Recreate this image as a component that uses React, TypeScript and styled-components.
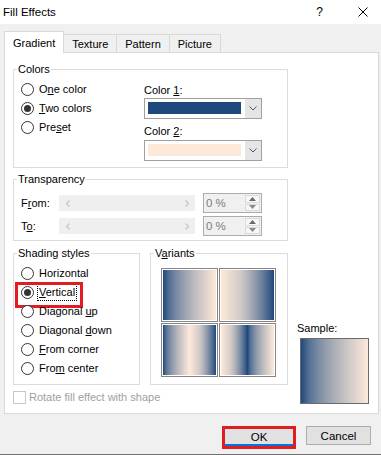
import React from "react";
import styled, { createGlobalStyle } from "styled-components";

const BLUE = "#1f497d";
const PEACH = "#fde9d9";

const GlobalStyle = createGlobalStyle`
  html, body { margin: 0; padding: 0; background: #f0f0f0; }
  body { font-family: "Liberation Sans", Arial, sans-serif; font-size: 11px; color: #000; }
  * { box-sizing: border-box; }
`;

const Window = styled.div`
  width: 381px;
  height: 455px;
  display: flex;
  flex-direction: column;
  background: #f0f0f0;
  border-bottom: 1px solid #707070;
  overflow: hidden;
`;

const TitleBar = styled.div`
  height: 24px;
  flex-shrink: 0;
  background: #fff;
  display: flex;
  align-items: center;
  padding: 0 13px 0 3px;
`;

const Title = styled.div`
  flex: 1;
  font-size: 11.5px;
`;

const HelpMark = styled.span`
  font-size: 12px;
  margin-right: 35px;
`;

const TabStrip = styled.div`
  display: flex;
  align-items: flex-end;
  height: 21px;
  margin: 7px 0 0 4px;
  position: relative;
  z-index: 1;
`;

const Tab = styled.div<{ $active?: boolean }>`
  height: ${(p) => (p.$active ? 22 : 18)}px;
  margin-bottom: ${(p) => (p.$active ? -1 : 0)}px;
  margin-left: -1px;
  &:first-child { margin-left: 0; }
  padding: 0 8px;
  display: flex;
  align-items: center;
  background: ${(p) => (p.$active ? "#fff" : "#f0f0f0")};
  border: 1px solid #d9d9d9;
  border-bottom: none;
  position: relative;
  z-index: ${(p) => (p.$active ? 2 : 1)};
`;

const Panel = styled.div`
  margin-left: 4px;
  width: 375px;
  height: 362px;
  flex-shrink: 0;
  background: #fff;
  border: 1px solid #d9d9d9;
  padding: 9px 0 0 8px;
  display: flex;
  flex-direction: column;
`;

const Group = styled.fieldset<{ $w: number }>`
  margin: 0;
  padding: 0;
  min-width: 0;
  width: ${(p) => p.$w}px;
  border: 1px solid #dcdcdc;
`;

const Legend = styled.legend`
  margin-left: 3px;
  padding: 0 1px;
  font-size: 11px;
  line-height: 14px;
`;

const ColorsBody = styled.div`
  display: flex;
  padding: 4px 0 6px 7px;
`;

const RadioList = styled.div<{ $w?: number }>`
  display: flex;
  flex-direction: column;
  width: ${(p) => (p.$w ? `${p.$w}px` : "auto")};
`;

const RadioRow = styled.div`
  height: 19px;
  display: flex;
  align-items: center;
  position: relative;
`;

const RadioCircle = styled.span<{ $checked?: boolean }>`
  width: 13px;
  height: 13px;
  flex-shrink: 0;
  border-radius: 50%;
  border: 1px solid #333;
  background: #fff;
  display: flex;
  align-items: center;
  justify-content: center;
  &::after {
    content: "";
    width: 7px;
    height: 7px;
    border-radius: 50%;
    background: ${(p) => (p.$checked ? "#333" : "transparent")};
  }
`;

const RadioText = styled.span<{ $focused?: boolean }>`
  margin-left: ${(p) => (p.$focused ? 4 : 5)}px;
  padding: 0 ${(p) => (p.$focused ? 1 : 0)}px;
  line-height: 15px;
  outline: ${(p) => (p.$focused ? "1px dotted #000" : "none")};
`;

const RedMark = styled.span`
  position: absolute;
  left: -6px;
  top: -1px;
  width: 68px;
  height: 26px;
  border: 3px solid #e31b23;
  pointer-events: none;
`;

const ColorColumn = styled.div`
  display: flex;
  flex-direction: column;
  width: 118px;
`;

const FieldLabel = styled.div<{ $top: number }>`
  line-height: 14px;
  margin-top: ${(p) => p.$top}px;
`;

const ColorCombo = styled.div<{ $top: number }>`
  display: flex;
  height: 21px;
  margin-top: ${(p) => p.$top}px;
  border: 1px solid #a0a0a0;
  background: #fff;
`;

const Swatch = styled.div<{ $color: string }>`
  flex: 1;
  margin: 3px 4px 4px 3px;
  background: ${(p) => p.$color};
`;

const ComboButton = styled.div`
  width: 16px;
  background: #e5e5e5;
  display: flex;
  align-items: center;
  justify-content: center;
`;

const TransBody = styled.div`
  display: flex;
  flex-direction: column;
  gap: 3px;
  padding: 7px 0 4px 7px;
`;

const SliderRow = styled.div`
  display: flex;
  align-items: center;
  height: 20px;
`;

const RowLabel = styled.span`
  width: 38px;
`;

const Slider = styled.div`
  width: 136px;
  height: 16px;
  background: #efefef;
  display: flex;
  align-items: center;
  justify-content: space-between;
  padding: 0 6px 0 7px;
`;

const SpinBox = styled.div`
  display: flex;
  width: 59px;
  height: 20px;
  margin-left: 8px;
  border: 1px solid #acacac;
  background: #f0f0f0;
`;

const SpinValue = styled.div`
  flex: 1;
  padding-left: 2px;
  display: flex;
  align-items: center;
  color: #7b7b7b;
  font-size: 11.5px;
`;

const SpinButtons = styled.div`
  width: 16px;
  display: flex;
  flex-direction: column;
  gap: 1px;
  padding: 1px 1px 1px 0;
`;

const SpinHalf = styled.div`
  flex: 1;
  background: #f7f7f7;
  border: 1px solid #dadada;
  display: flex;
  align-items: center;
  justify-content: center;
`;

const Lower = styled.div`
  display: flex;
  margin-top: 5px;
`;

const LeftCol = styled.div`
  display: flex;
  flex-direction: column;
`;

const GroupsRow = styled.div`
  display: flex;
  gap: 10px;
  align-items: stretch;
`;

const ShadingBody = styled.div`
  padding: 4px 0 6px 7px;
`;

const VariantsBody = styled.div`
  display: grid;
  grid-template-columns: 57px 57px;
  grid-auto-rows: 54px;
  gap: 1px;
  padding: 8px 0 0 10px;
`;

const Tile = styled.div<{ $fill: string }>`
  border: 1px solid #858585;
  padding: 1px;
  background: #fff;
  &::after {
    content: "";
    display: block;
    width: 100%;
    height: 100%;
    background: ${(p) => p.$fill};
  }
`;

const CheckRow = styled.div`
  display: flex;
  align-items: center;
  height: 14px;
  margin-top: 5px;
  color: #a0a0a0;
`;

const CheckBox = styled.span`
  width: 13px;
  height: 13px;
  border: 1px solid #c8c8c8;
  background: #fff;
  margin-right: 3px;
`;

const SampleCol = styled.div`
  display: flex;
  flex-direction: column;
  justify-content: flex-end;
  margin-left: 9px;
`;

const SampleLabel = styled.div`
  line-height: 14px;
`;

const SampleBox = styled.div`
  width: 69px;
  height: 66px;
  margin: 3px 0 0 3px;
  border: 1px solid #6b6b6b;
  background: linear-gradient(90deg, ${BLUE}, 35%, ${PEACH});
`;

const Footer = styled.div`
  display: flex;
  justify-content: flex-end;
  align-items: flex-start;
  gap: 10px;
  padding: 12px 10px 0 0;
`;

const RedFrame = styled.div`
  width: 74px;
  height: 23px;
  border: 3px solid #e31b23;
  display: flex;
`;

const Button = styled.div<{ $default?: boolean }>`
  width: ${(p) => (p.$default ? "100%" : "65px")};
  height: ${(p) => (p.$default ? "100%" : "19px")};
  background: #e1e1e1;
  border: ${(p) => (p.$default ? "none" : "1px solid #adadad")};
  border-bottom: ${(p) => (p.$default ? "2px solid #0078d7" : "1px solid #adadad")};
  display: flex;
  align-items: center;
  justify-content: center;
  font-size: 11.5px;
`;

const Chevron = () => (
  <svg width="8" height="5" viewBox="0 0 8 5">
    <polyline points="0.5,0.5 4,4 7.5,0.5" fill="none" stroke="#555" strokeWidth="1" />
  </svg>
);

const Arrow = ({ dir }: { dir: "left" | "right" }) => (
  <svg width="4" height="7" viewBox="0 0 4 7">
    <polyline
      points={dir === "left" ? "3.5,0.5 0.5,3.5 3.5,6.5" : "0.5,0.5 3.5,3.5 0.5,6.5"}
      fill="none"
      stroke="#c4c4c4"
      strokeWidth="1.2"
    />
  </svg>
);

const Tri = ({ up }: { up?: boolean }) => (
  <svg width="7" height="4" viewBox="0 0 7 4">
    <polygon points={up ? "0,4 3.5,0 7,4" : "0,0 3.5,4 7,0"} fill={up ? "#6a6a6a" : "#8a8a8a"} />
  </svg>
);

const CloseIcon = () => (
  <svg width="10" height="10" viewBox="0 0 10 10">
    <path d="M0.5 0.5 L9.5 9.5 M9.5 0.5 L0.5 9.5" stroke="#000" strokeWidth="1" />
  </svg>
);

const Radio = ({ checked, focused, marked, children }: { checked?: boolean; focused?: boolean; marked?: boolean; children: React.ReactNode }) => (
  <RadioRow>
    <RadioCircle $checked={checked} />
    <RadioText $focused={focused}>{children}</RadioText>
    {marked && <RedMark />}
  </RadioRow>
);

const TransRow = ({ label }: { label: React.ReactNode }) => (
  <SliderRow>
    <RowLabel>{label}</RowLabel>
    <Slider>
      <Arrow dir="left" />
      <Arrow dir="right" />
    </Slider>
    <SpinBox>
      <SpinValue>0 %</SpinValue>
      <SpinButtons>
        <SpinHalf><Tri up /></SpinHalf>
        <SpinHalf><Tri /></SpinHalf>
      </SpinButtons>
    </SpinBox>
  </SliderRow>
);

const variants = [
  `linear-gradient(90deg, ${BLUE}, 35%, ${PEACH})`,
  `linear-gradient(90deg, ${PEACH}, 65%, ${BLUE})`,
  `linear-gradient(90deg, ${BLUE}, 17%, ${PEACH} 50%, 83%, ${BLUE})`,
  `linear-gradient(90deg, ${PEACH}, 33%, ${BLUE} 50%, 67%, ${PEACH})`,
];

export default function App() {
  return (
    <Window>
      <GlobalStyle />
      <TitleBar>
        <Title>Fill Effects</Title>
        <HelpMark>?</HelpMark>
        <CloseIcon />
      </TitleBar>

      <TabStrip>
        <Tab $active>Gradient</Tab>
        <Tab>Texture</Tab>
        <Tab>Pattern</Tab>
        <Tab>Picture</Tab>
      </TabStrip>

      <Panel>
        <Group $w={275}>
          <Legend>Colors</Legend>
          <ColorsBody>
            <RadioList $w={123}>
              <Radio>O<u>n</u>e color</Radio>
              <Radio checked><u>T</u>wo colors</Radio>
              <Radio>Pre<u>s</u>et</Radio>
            </RadioList>
            <ColorColumn>
              <FieldLabel $top={3}>Color <u>1</u>:</FieldLabel>
              <ColorCombo $top={1}>
                <Swatch $color={BLUE} />
                <ComboButton><Chevron /></ComboButton>
              </ColorCombo>
              <FieldLabel $top={5}>Color <u>2</u>:</FieldLabel>
              <ColorCombo $top={2}>
                <Swatch $color={PEACH} />
                <ComboButton><Chevron /></ComboButton>
              </ColorCombo>
            </ColorColumn>
          </ColorsBody>
        </Group>

        <Group $w={275} style={{ marginTop: 4 }}>
          <Legend>Transparency</Legend>
          <TransBody>
            <TransRow label={<>F<u>r</u>om:</>} />
            <TransRow label={<>T<u>o</u>:</>} />
          </TransBody>
        </Group>

        <Lower>
          <LeftCol>
            <GroupsRow>
              <Group $w={127}>
                <Legend>Shading styles</Legend>
                <ShadingBody>
                  <RadioList>
                    <Radio>Horizontal</Radio>
                    <Radio checked focused marked><u>V</u>ertical</Radio>
                    <Radio>Diagonal <u>u</u>p</Radio>
                    <Radio>Diagonal <u>d</u>own</Radio>
                    <Radio><u>F</u>rom corner</Radio>
                    <Radio>Fro<u>m</u> center</Radio>
                  </RadioList>
                </ShadingBody>
              </Group>
              <Group $w={138}>
                <Legend>V<u>a</u>riants</Legend>
                <VariantsBody>
                  {variants.map((v, i) => (
                    <Tile key={i} $fill={v} />
                  ))}
                </VariantsBody>
              </Group>
            </GroupsRow>
            <CheckRow>
              <CheckBox />
              Rotate fill effect with shape
            </CheckRow>
          </LeftCol>
          <SampleCol>
            <SampleLabel>Sample:</SampleLabel>
            <SampleBox />
          </SampleCol>
        </Lower>
      </Panel>

      <Footer>
        <RedFrame>
          <Button $default>OK</Button>
        </RedFrame>
        <Button>Cancel</Button>
      </Footer>
    </Window>
  );
}
